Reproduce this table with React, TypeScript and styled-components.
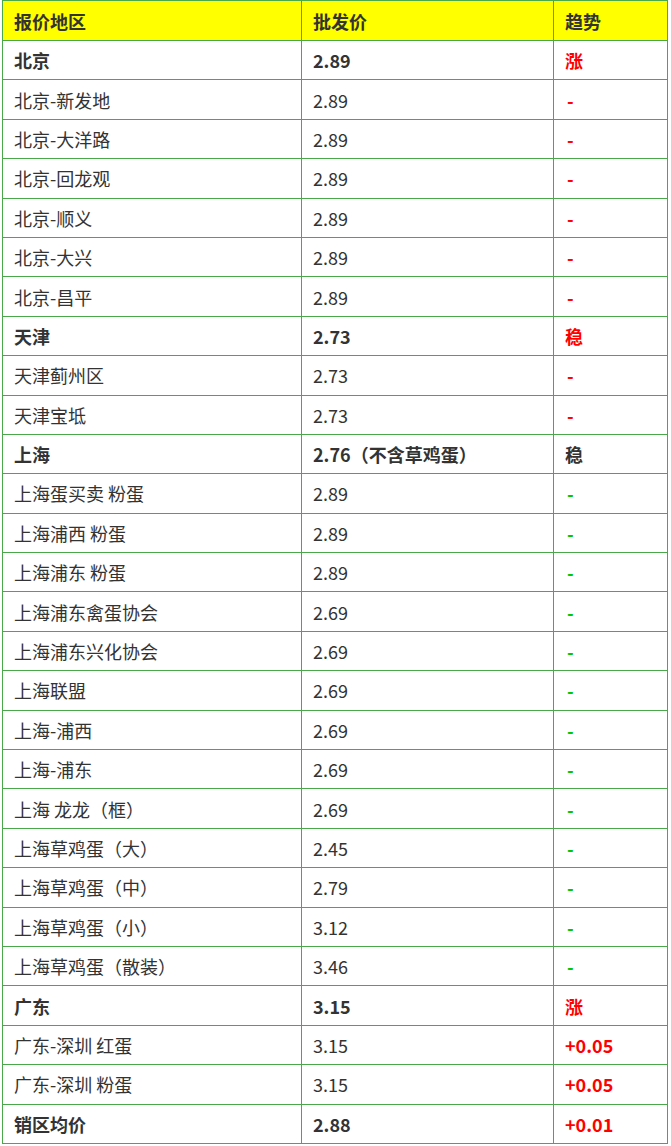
import styled, { createGlobalStyle } from "styled-components"

const GlobalStyle = createGlobalStyle`
  html, body {
    margin: 0;
    padding: 0;
    background: #ffffff;
  }
  body {
    font-family: "Noto Sans CJK SC", "Microsoft YaHei", sans-serif;
  }
`

type Trend = "up" | "down" | "flat"

type Row = {
  area: string
  price: string
  trend: string
  tone?: Trend
  bold?: boolean
}

const rows: Row[] = [
  { area: "北京", price: "2.89", trend: "涨", tone: "up", bold: true },
  { area: "北京-新发地", price: "2.89", trend: "-", tone: "up" },
  { area: "北京-大洋路", price: "2.89", trend: "-", tone: "up" },
  { area: "北京-回龙观", price: "2.89", trend: "-", tone: "up" },
  { area: "北京-顺义", price: "2.89", trend: "-", tone: "up" },
  { area: "北京-大兴", price: "2.89", trend: "-", tone: "up" },
  { area: "北京-昌平", price: "2.89", trend: "-", tone: "up" },
  { area: "天津", price: "2.73", trend: "稳", tone: "up", bold: true },
  { area: "天津蓟州区", price: "2.73", trend: "-", tone: "up" },
  { area: "天津宝坻", price: "2.73", trend: "-", tone: "up" },
  { area: "上海", price: "2.76（不含草鸡蛋）", trend: "稳", tone: "flat", bold: true },
  { area: "上海蛋买卖 粉蛋", price: "2.89", trend: "-", tone: "down" },
  { area: "上海浦西 粉蛋", price: "2.89", trend: "-", tone: "down" },
  { area: "上海浦东 粉蛋", price: "2.89", trend: "-", tone: "down" },
  { area: "上海浦东禽蛋协会", price: "2.69", trend: "-", tone: "down" },
  { area: "上海浦东兴化协会", price: "2.69", trend: "-", tone: "down" },
  { area: "上海联盟", price: "2.69", trend: "-", tone: "down" },
  { area: "上海-浦西", price: "2.69", trend: "-", tone: "down" },
  { area: "上海-浦东", price: "2.69", trend: "-", tone: "down" },
  { area: "上海 龙龙（框）", price: "2.69", trend: "-", tone: "down" },
  { area: "上海草鸡蛋（大）", price: "2.45", trend: "-", tone: "down" },
  { area: "上海草鸡蛋（中）", price: "2.79", trend: "-", tone: "down" },
  { area: "上海草鸡蛋（小）", price: "3.12", trend: "-", tone: "down" },
  { area: "上海草鸡蛋（散装）", price: "3.46", trend: "-", tone: "down" },
  { area: "广东", price: "3.15", trend: "涨", tone: "up", bold: true },
  { area: "广东-深圳 红蛋", price: "3.15", trend: "+0.05", tone: "up" },
  { area: "广东-深圳 粉蛋", price: "3.15", trend: "+0.05", tone: "up" },
  { area: "销区均价", price: "2.88", trend: "+0.01", tone: "up", bold: true },
]

const toneColor = (tone?: Trend) =>
  tone === "up" ? "#ff0000" : tone === "down" ? "#00c800" : "#333333"

const App = () => {
  return (
    <Wrapper>
      <GlobalStyle />
      <PriceTable>
        <colgroup>
          <col style={{ width: 299 }} />
          <col style={{ width: 252 }} />
          <col />
        </colgroup>
        <thead>
          <tr>
            <HeadCell>报价地区</HeadCell>
            <HeadCell>批发价</HeadCell>
            <HeadCell>趋势</HeadCell>
          </tr>
        </thead>
        <tbody>
          {rows.map((row, index) => (
            <tr key={index}>
              <Cell $bold={row.bold}>{row.area}</Cell>
              <Cell $bold={row.bold}>{row.price}</Cell>
              <TrendCell
                $color={toneColor(row.tone)}
                $bold={row.bold || row.trend !== "-"}
                $dash={row.trend === "-"}
              >
                {row.trend}
              </TrendCell>
            </tr>
          ))}
        </tbody>
      </PriceTable>
    </Wrapper>
  )
}

const Wrapper = styled.div`
  padding: 0 3px 0 2px;
  width: 671px;
  box-sizing: border-box;
`

const PriceTable = styled.table`
  width: 666px;
  border-collapse: collapse;
  table-layout: fixed;
  font-size: 18px;
  color: #333333;

  td,
  th {
    border: 1px solid #4aa84a;
    padding: 0 0 0 11px;
    text-align: left;
    vertical-align: middle;
    white-space: nowrap;
  }
`

const HeadCell = styled.th`
  height: 39px;
  background-color: #ffff00;
  font-weight: 700;
`

const Cell = styled.td<{ $bold?: boolean }>`
  height: 38.4px;
  font-weight: ${(p) => (p.$bold ? 700 : 400)};
`

const TrendCell = styled(Cell)<{ $color: string; $dash?: boolean }>`
  color: ${(p) => p.$color};
  font-weight: 700;
  padding-left: ${(p) => (p.$dash ? "13px" : "11px")} !important;
`

export default App
